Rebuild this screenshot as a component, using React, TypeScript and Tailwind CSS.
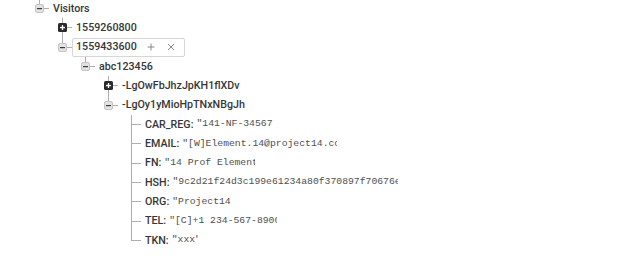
import React from "react";

type Leaf = { k: string; v: string; w: string };
type Node = { label: string; open: boolean; hover?: boolean; children?: Node[]; leaves?: Leaf[] };

const tree: Node = {
  label: "Visitors",
  open: true,
  children: [
    { label: "1559260800", open: false },
    {
      label: "1559433600",
      open: true,
      hover: true,
      children: [
        {
          label: "abc123456",
          open: true,
          children: [
            { label: "-LgOwFbJhzJpKH1flXDv", open: false },
            {
              label: "-LgOy1yMioHpTNxNBgJh",
              open: true,
              leaves: [
                { k: "CAR_REG", v: '"141-NF-34567"', w: "w-[13ch]" },
                { k: "EMAIL", v: '"[W]Element.14@project14.com"', w: "w-[26.5ch]" },
                { k: "FN", v: '"14 Prof Element"', w: "w-[15.5ch]" },
                { k: "HSH", v: '"9c2d21f24d3c199e61234a80f370897f70676e4a1b"', w: "w-[38.5ch]" },
                { k: "ORG", v: '"Project14"', w: "w-[10ch]" },
                { k: "TEL", v: '"[C]+1 234-567-8900"', w: "w-[18.5ch]" },
                { k: "TKN", v: '"xxx"', w: "w-[4.5ch]" },
              ],
            },
          ],
        },
      ],
    },
  ],
};

const LINE = "bg-[#aeaeae]";

function Toggle({ open }: { open: boolean }) {
  if (open) {
    return (
      <svg width="9" height="9" viewBox="0 0 9 9" className="block shrink-0">
        <rect x="0.5" y="0.5" width="8" height="8" rx="1.5" fill="#e2e2e2" stroke="#c4c4c4" />
        <rect x="2" y="4" width="5" height="1.2" fill="#3a3a3a" />
      </svg>
    );
  }
  return (
    <svg width="9" height="9" viewBox="0 0 9 9" className="block shrink-0">
      <rect x="0" y="0" width="9" height="9" rx="1.5" fill="#2b2b2b" />
      <rect x="2" y="3.9" width="5" height="1.3" fill="#ffffff" />
      <rect x="3.85" y="2" width="1.3" height="5" fill="#ffffff" />
    </svg>
  );
}

function LeafRow({ leaf, last }: { leaf: Leaf; last: boolean }) {
  return (
    <div className="flex h-[19.33px]">
      <div className="ml-[4px] flex w-px flex-col">
        {last ? <div className={`h-[10px] w-px ${LINE}`} /> : <div className={`flex-1 w-px ${LINE}`} />}
      </div>
      <div className={`h-px w-[9px] self-center ${LINE}`} />
      <div className="flex items-center border border-transparent px-[3px] whitespace-nowrap">
        <span className="font-['Roboto',sans-serif] text-[10.7px] font-medium text-[#363636]">{leaf.k}:</span>
        <span
          className={`ml-[3px] overflow-hidden ${leaf.w} font-['Liberation_Mono',monospace] text-[9.75px] text-[#4f4f4f]`}
        >
          {leaf.v}
        </span>
      </div>
    </div>
  );
}

function TreeNode({ node, last }: { node: Node; last: boolean }) {
  return (
    <div className="flex">
      <div className="flex w-[9px] shrink-0 flex-col items-center">
        <div className={`h-[5px] w-px ${LINE}`} />
        <Toggle open={node.open} />
        {!last && <div className={`flex-1 w-px ${LINE}`} />}
      </div>
      <div className="flex flex-col">
        <div className="flex h-[19.33px] items-center">
          <div className={`h-px w-[5px] ${LINE}`} />
          <div
            className={`flex h-[19px] items-center rounded-[2px] border px-[3px] whitespace-nowrap ${
              node.hover ? "border-[#d6d6d6]" : "border-transparent"
            }`}
          >
            <span className="font-['Roboto',sans-serif] text-[10.7px] font-medium text-[#363636]">{node.label}</span>
            {node.hover && (
              <div className="ml-[10px] flex items-center gap-[12px] pr-[6px]">
                <svg width="8" height="8" viewBox="0 0 8 8" className="block">
                  <path d="M4 0.5V7.5M0.5 4H7.5" stroke="#8a8a8a" strokeWidth="1" />
                </svg>
                <svg width="8" height="8" viewBox="0 0 8 8" className="block">
                  <path d="M1 1L7 7M7 1L1 7" stroke="#8a8a8a" strokeWidth="1" />
                </svg>
              </div>
            )}
          </div>
        </div>
        {node.open && node.children && (
          <div className="-ml-[9px] pl-[23px]">
            {node.children.map((c, i) => (
              <TreeNode key={c.label} node={c} last={i === node.children!.length - 1} />
            ))}
          </div>
        )}
        {node.open && node.leaves && (
          <div className="-ml-[9px] pl-[23px]">
            {node.leaves.map((l, i) => (
              <LeafRow key={l.k} leaf={l} last={i === node.leaves!.length - 1} />
            ))}
          </div>
        )}
      </div>
    </div>
  );
}

export default function App() {
  return (
    <div className="h-[262px] w-[620px] overflow-hidden bg-white">
      <div className="-mt-[1px] pl-[35px]">
        <TreeNode node={tree} last={true} />
      </div>
    </div>
  );
}
